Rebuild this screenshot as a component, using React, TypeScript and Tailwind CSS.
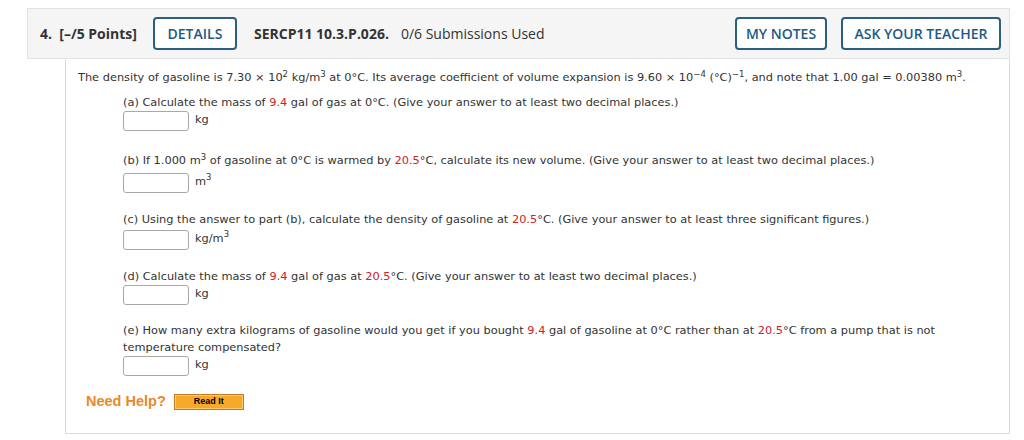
import React from "react";

const red = "text-[#d0202a]";

function AnswerRow({ unit, className = "" }: { unit: React.ReactNode; className?: string }) {
  return (
    <div className={`flex items-center ${className}`}>
      <div className="h-[20px] w-[66px] rounded-[3px] border border-[#a9a9a9] bg-white" />
      <span className="ml-[6px] -mt-[4px]">{unit}</span>
    </div>
  );
}

export default function App() {
  return (
    <div className="h-[440px] w-[1024px] bg-white pt-[8px] pl-[27px] text-[#333]">
      <div className="w-[983px]">
        {/* header strip */}
        <div className="flex h-[51px] items-center border border-[#e3e3e3] bg-[#f5f5f5] pl-[12px] pr-[8px] text-[14px] font-['Open_Sans',sans-serif]">
          <span className="font-bold">4.&nbsp; [–/5 Points]</span>
          <button className="ml-[16px] h-[33px] w-[84px] rounded-[4px] border-2 border-[#2b5f82] bg-white font-semibold text-[#1e5a82]">
            DETAILS
          </button>
          <span className="ml-[17px] font-bold">SERCP11 10.3.P.026.</span>
          <span className="ml-[12px]">0/6 Submissions Used</span>
          <div className="ml-auto flex gap-[14px]">
            <button className="h-[33px] w-[92px] rounded-[4px] border-2 border-[#2b5f82] bg-white font-semibold text-[#1e5a82]">
              MY NOTES
            </button>
            <button className="h-[33px] w-[160px] rounded-[4px] border-2 border-[#2b5f82] bg-white font-semibold text-[#1e5a82]">
              ASK YOUR TEACHER
            </button>
          </div>
        </div>

        {/* question body */}
        <div className="ml-[38px] h-[375px] border-x border-b border-[#dcdcdc] pl-[12px] pr-[10px] pt-[10px] text-[11.35px] leading-[17px] font-['DejaVu_Sans',Verdana,sans-serif]">
          <p>
            The density of gasoline is 7.30 × 10<sup>2</sup> kg/m<sup>3</sup> at 0°C. Its average coefficient of volume
            expansion is 9.60 × 10<sup>−4</sup> (°C)<sup>−1</sup>, and note that 1.00 gal = 0.00380 m<sup>3</sup>.
          </p>

          <div className="pl-[45px]">
            <p className="mt-[8px]">
              (a) Calculate the mass of <span className={red}>9.4</span> gal of gas at 0°C. (Give your answer to at least two
              decimal places.)
            </p>
            <AnswerRow unit="kg" />

            <p className="mt-[21px]">
              (b) If 1.000 m<sup>3</sup> of gasoline at 0°C is warmed by <span className={red}>20.5</span>°C, calculate its new
              volume. (Give your answer to at least two decimal places.)
            </p>
            <AnswerRow
              className="mt-[4px]"
              unit={
                <>
                  m<sup>3</sup>
                </>
              }
            />

            <p className="mt-[18px]">
              (c) Using the answer to part (b), calculate the density of gasoline at <span className={red}>20.5</span>°C. (Give
              your answer to at least three significant figures.)
            </p>
            <AnswerRow
              className="mt-[2px]"
              unit={
                <>
                  kg/m<sup>3</sup>
                </>
              }
            />

            <p className="mt-[18px]">
              (d) Calculate the mass of <span className={red}>9.4</span> gal of gas at <span className={red}>20.5</span>°C. (Give
              your answer to at least two decimal places.)
            </p>
            <AnswerRow unit="kg" />

            <p className="mt-[17px]">
              (e) How many extra kilograms of gasoline would you get if you bought <span className={red}>9.4</span> gal of gasoline
              at 0°C rather than at <span className={red}>20.5</span>°C from a pump that is not temperature compensated?
            </p>
            <AnswerRow unit="kg" />
          </div>

          <div className="mt-[17px] ml-[8px] flex items-center font-['Liberation_Sans',Arial,sans-serif]">
            <span className="text-[14.5px] font-bold text-[#e8892a]">Need Help?</span>
            <button className="ml-[8px] flex h-[16px] w-[70px] items-center justify-center border border-[#c77a1e] bg-[#f7a92a] shadow-[inset_0_0_0_1px_#fbc86a] text-[9px] font-bold leading-none text-black">
              Read It
            </button>
          </div>
        </div>
      </div>
    </div>
  );
}
